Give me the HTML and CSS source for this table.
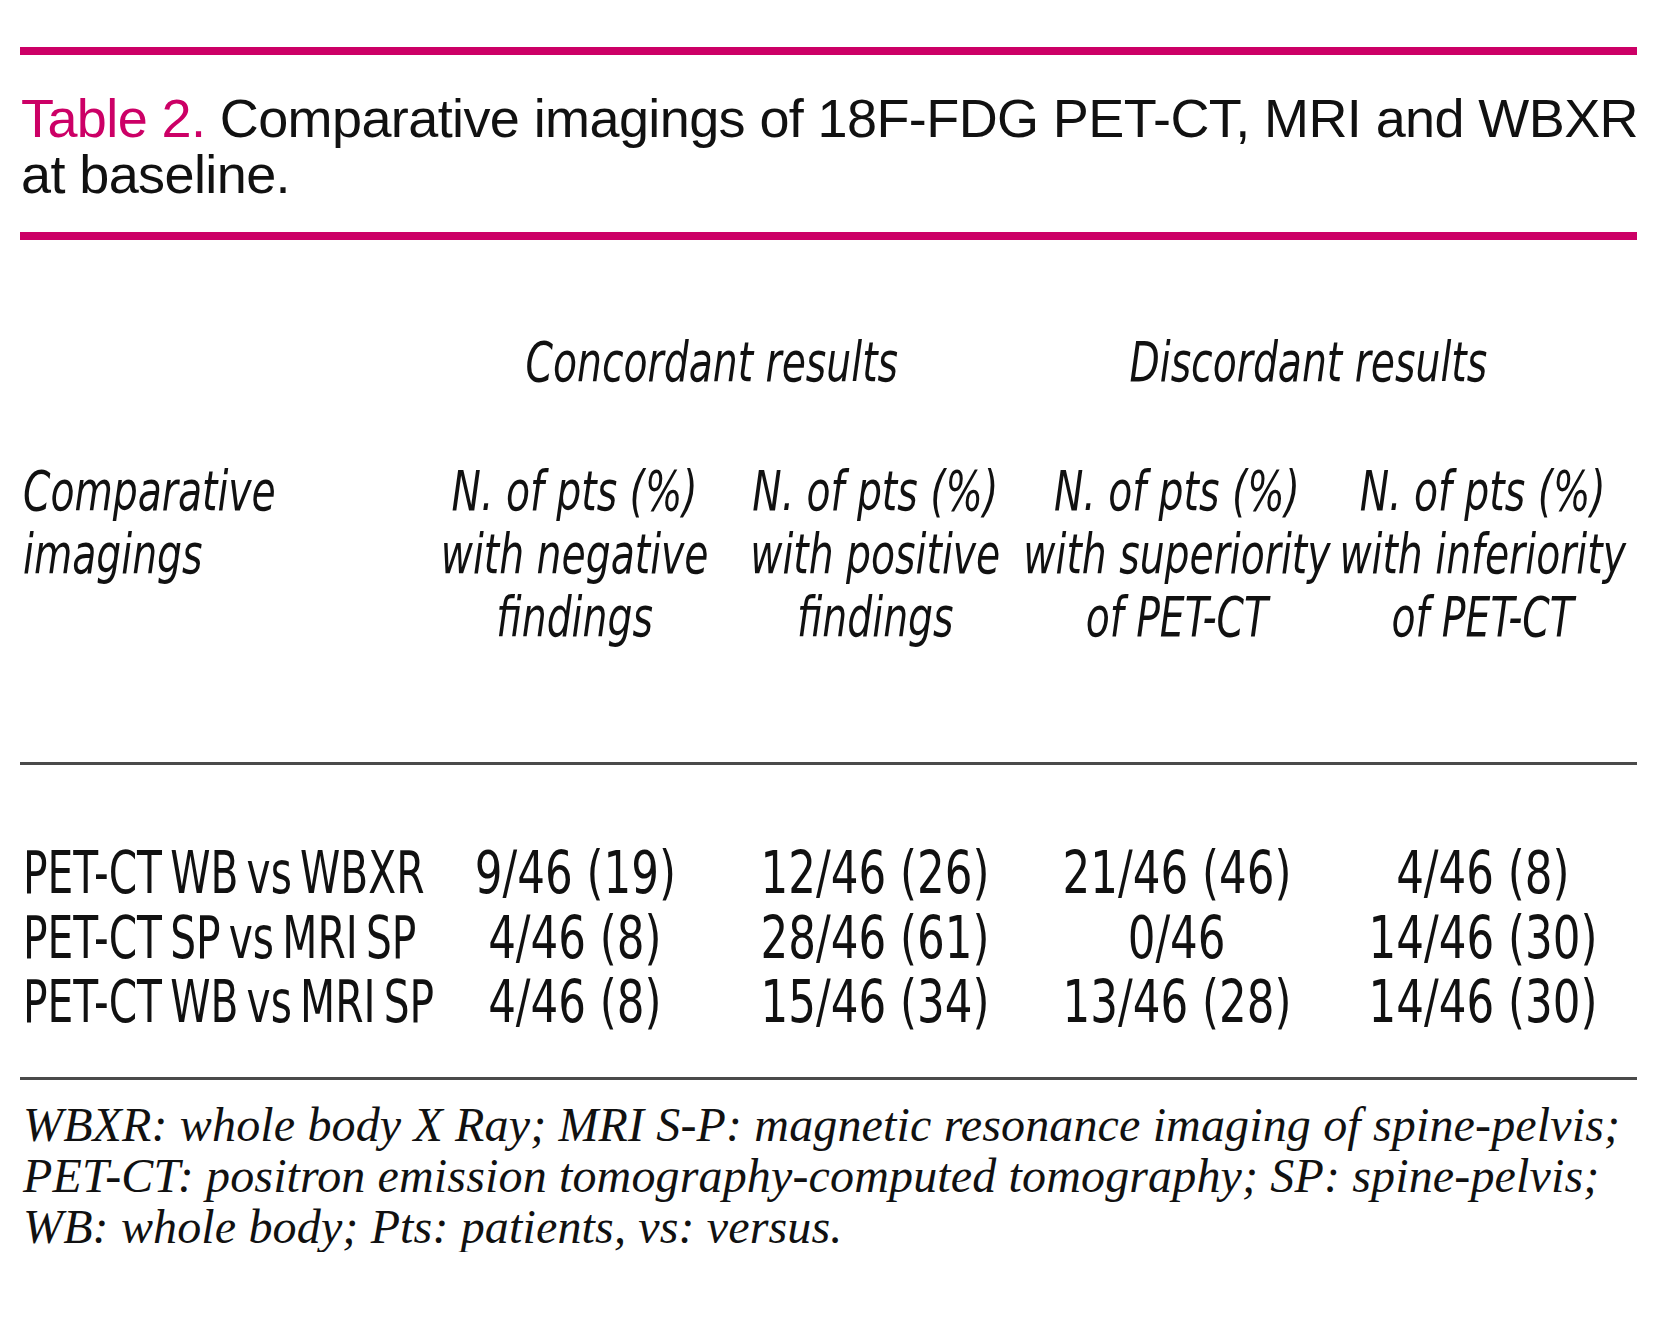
FILE: index.html
```html
<!DOCTYPE html>
<html lang="en">
<head>
<meta charset="utf-8">
<title>Table 2</title>
<link rel="stylesheet" href="styles.css">
</head>
<body>
<div class="sheet">
  <div class="rule-accent"></div>
  <h1 class="title"><span class="title-label">Table 2.</span> Comparative imagings of 18F-FDG PET-CT, MRI and WBXR<br>at baseline.</h1>
  <div class="rule-accent"></div>

  <div class="results">
    <div class="cell group-row"></div>
    <div class="cell group-row group concordant"><span class="sq">Concordant results</span></div>
    <div class="cell group-row group discordant"><span class="sq">Discordant results</span></div>

    <div class="cell head first"><span class="sq">Comparative<br>imagings</span></div>
    <div class="cell head"><span class="sq">N. of pts (%)<br>with negative<br>findings</span></div>
    <div class="cell head"><span class="sq">N. of pts (%)<br>with positive<br>findings</span></div>
    <div class="cell head"><span class="sq">N. of pts (%)<br>with superiority<br>of PET-CT</span></div>
    <div class="cell head"><span class="sq">N. of pts (%)<br>with inferiority<br>of PET-CT</span></div>

    <div class="rule-line"></div>

    <div class="cell data top first"><span class="sq">PET-CT WB vs WBXR</span></div>
    <div class="cell data top"><span class="sq">9/46 (19)</span></div>
    <div class="cell data top"><span class="sq">12/46 (26)</span></div>
    <div class="cell data top"><span class="sq">21/46 (46)</span></div>
    <div class="cell data top"><span class="sq">4/46 (8)</span></div>

    <div class="cell data first"><span class="sq">PET-CT SP vs MRI SP</span></div>
    <div class="cell data"><span class="sq">4/46 (8)</span></div>
    <div class="cell data"><span class="sq">28/46 (61)</span></div>
    <div class="cell data"><span class="sq">0/46</span></div>
    <div class="cell data"><span class="sq">14/46 (30)</span></div>

    <div class="cell data bottom first"><span class="sq">PET-CT WB vs MRI SP</span></div>
    <div class="cell data bottom"><span class="sq">4/46 (8)</span></div>
    <div class="cell data bottom"><span class="sq">15/46 (34)</span></div>
    <div class="cell data bottom"><span class="sq">13/46 (28)</span></div>
    <div class="cell data bottom"><span class="sq">14/46 (30)</span></div>

    <div class="rule-line"></div>
  </div>

  <p class="notes">WBXR: whole body X Ray; MRI S-P: magnetic resonance imaging of spine-pelvis;<br>PET-CT: positron emission tomography-computed tomography; SP: spine-pelvis;<br>WB: whole body; Pts: patients, vs: versus.</p>
</div>
</body>
</html>
```

FILE: styles.css
```css
body {
  margin: 0;
  background: #ffffff;
}

.sheet {
  width: 1617px;
  margin-left: 20px;
  padding-top: 47px;
}

.rule-accent {
  height: 8px;
  background: #cc0066;
}

.title {
  margin: 35px 0 30px;
  padding-left: 1px;
  font-family: "Liberation Sans", Arial, sans-serif;
  font-weight: 400;
  font-size: 54px;
  line-height: 56px;
  letter-spacing: -0.6px;
  white-space: nowrap;
  color: #111111;
}

.title-label {
  color: #cc0066;
}

.results {
  display: grid;
  grid-template-columns: 405px 300px 300px 304px 308px;
  font-family: "DejaVu Sans Condensed", "DejaVu Sans", "Liberation Sans", sans-serif;
  font-stretch: condensed;
  color: #111111;
}

.cell {
  display: flex;
  justify-content: center;
  align-items: flex-start;
  white-space: nowrap;
}

.cell.first {
  justify-content: flex-start;
  padding-left: 3px;
}

.sq {
  display: inline-block;
  text-align: center;
  transform: scaleX(0.78);
  transform-origin: center top;
}

.first .sq {
  text-align: left;
  transform-origin: left top;
}

.group-row {
  padding-top: 90px;
  font-style: italic;
  font-size: 56px;
  line-height: 63px;
}

.group {
  grid-column: span 2;
}

.group.concordant {
  padding-right: 26px;
}

.group.discordant {
  padding-right: 46px;
}

.head {
  padding-top: 66px;
  padding-bottom: 114px;
  font-style: italic;
  font-size: 56px;
  line-height: 63px;
}

.rule-line {
  grid-column: 1 / -1;
  height: 3px;
  background: #4a4a4a;
}

.data {
  font-size: 58px;
  line-height: 64.5px;
}

.data .sq {
  transform: scaleX(0.835);
}

.data.first .sq {
  transform: scaleX(0.78);
  word-spacing: -6px;
}

.data.top {
  padding-top: 76px;
}

.data.bottom {
  padding-bottom: 42px;
}

.notes {
  margin: 0;
  padding: 19px 0 0 3px;
  font-family: "Liberation Serif", "Times New Roman", serif;
  font-style: italic;
  font-size: 48px;
  line-height: 51px;
  letter-spacing: 0.15px;
  color: #111111;
  white-space: nowrap;
}
```
